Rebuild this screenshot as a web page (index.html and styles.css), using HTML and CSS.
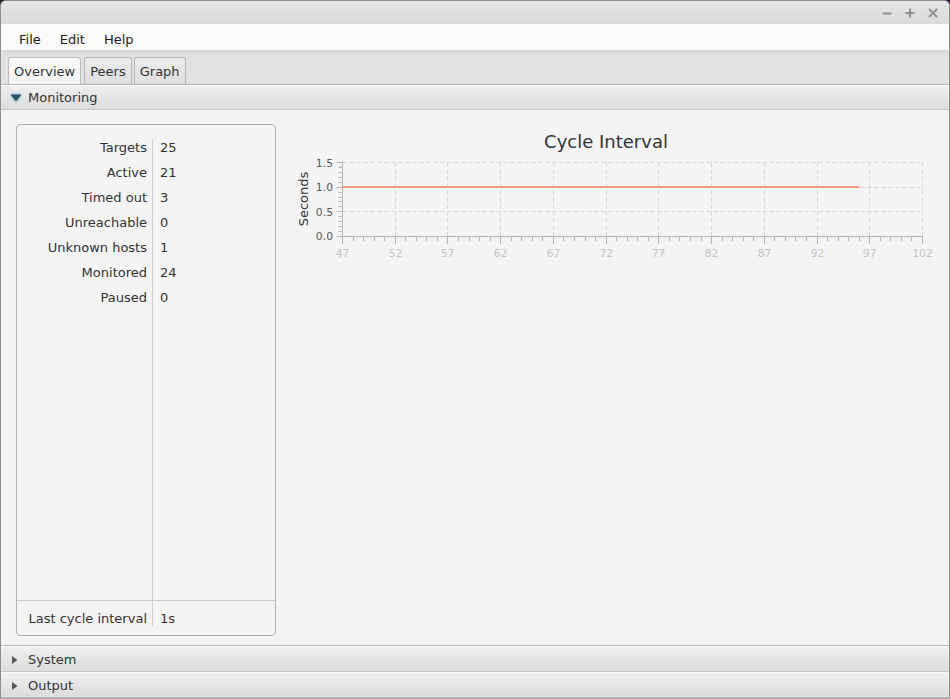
FILE: index.html
```html
<!DOCTYPE html>
<html>
<head>
<meta charset="utf-8">
<link rel="stylesheet" href="styles.css">
</head>
<body>
<div class="window">
  <div class="titlebar">
    <div class="controls">
      <svg class="ctl" width="10" height="10" viewBox="0 0 10 10"><path d="M0.5 5.5H9.5" /></svg>
      <svg class="ctl" width="10" height="10" viewBox="0 0 10 10"><path d="M0.5 5H9.5M5 0.5V9.5" /></svg>
      <svg class="ctl" width="10" height="10" viewBox="0 0 10 10"><path d="M1 1L9 9M9 1L1 9" /></svg>
    </div>
  </div>
  <div class="menubar">
    <span class="menu">File</span>
    <span class="menu">Edit</span>
    <span class="menu">Help</span>
  </div>
  <div class="tabbar">
    <div class="tab selected">Overview</div>
    <div class="tab">Peers</div>
    <div class="tab">Graph</div>
  </div>
  <div class="pane-header expanded">
    <svg class="arrow-down" width="14" height="10" viewBox="0 0 14 10"><polygon points="1.5,1.5 12.5,1.5 7,8.5" /></svg>
    <span>Monitoring</span>
  </div>
  <div class="pane-content">
    <div class="stats">
      <div class="stats-top">
        <div class="col-labels">
          <div class="row">Targets</div>
          <div class="row">Active</div>
          <div class="row">Timed out</div>
          <div class="row">Unreachable</div>
          <div class="row">Unknown hosts</div>
          <div class="row">Monitored</div>
          <div class="row">Paused</div>
        </div>
        <div class="sep"></div>
        <div class="col-values">
          <div class="row">25</div>
          <div class="row">21</div>
          <div class="row">3</div>
          <div class="row">0</div>
          <div class="row">1</div>
          <div class="row">24</div>
          <div class="row">0</div>
        </div>
      </div>
      <div class="stats-bottom">
        <div class="col-labels"><div class="row">Last cycle interval</div></div>
        <div class="sep short"></div>
        <div class="col-values"><div class="row">1s</div></div>
      </div>
    </div>
    <div class="chart">
      <svg width="655" height="150" viewBox="0 0 655 150">
        <text class="chart-title" x="321" y="17">Cycle Interval</text>
        <text class="axis-name" transform="translate(18 75) rotate(-90)">Seconds</text>
        <g class="grid">
          <path d="M57.5 38.5H637.5M57.5 63.5H637.5M57.5 87.5H637.5" />
          <path d="M110.5 38.5V112.5M162.5 38.5V112.5M215.5 38.5V112.5M268.5 38.5V112.5M321.5 38.5V112.5M373.5 38.5V112.5M426.5 38.5V112.5M479.5 38.5V112.5M532.5 38.5V112.5M584.5 38.5V112.5M637.5 38.5V112.5" />
        </g>
        <g class="axis">
          <path d="M57.5 38V113M57 112.5H638" />
          <path d="M51.5 38.5H57.5M51.5 63.5H57.5M51.5 87.5H57.5M51.5 112.5H57.5" />
          <path d="M53.5 107.5H57.5M53.5 102.5H57.5M53.5 97.5H57.5M53.5 92.5H57.5M53.5 82.5H57.5M53.5 77.5H57.5M53.5 73.5H57.5M53.5 68.5H57.5M53.5 58.5H57.5M53.5 53.5H57.5M53.5 48.5H57.5M53.5 43.5H57.5" />
          <path d="M57.5 112.5V120M110.5 112.5V120M162.5 112.5V120M215.5 112.5V120M268.5 112.5V120M321.5 112.5V120M373.5 112.5V120M426.5 112.5V120M479.5 112.5V120M532.5 112.5V120M584.5 112.5V120M637.5 112.5V120" />
          <path d="M68.5 112.5V117M78.5 112.5V117M89.5 112.5V117M99.5 112.5V117M120.5 112.5V117M131.5 112.5V117M141.5 112.5V117M152.5 112.5V117M173.5 112.5V117M184.5 112.5V117M194.5 112.5V117M205.5 112.5V117M226.5 112.5V117M236.5 112.5V117M247.5 112.5V117M257.5 112.5V117M278.5 112.5V117M289.5 112.5V117M300.5 112.5V117M310.5 112.5V117M331.5 112.5V117M342.5 112.5V117M352.5 112.5V117M363.5 112.5V117M384.5 112.5V117M394.5 112.5V117M405.5 112.5V117M416.5 112.5V117M437.5 112.5V117M447.5 112.5V117M458.5 112.5V117M468.5 112.5V117M489.5 112.5V117M500.5 112.5V117M510.5 112.5V117M521.5 112.5V117M542.5 112.5V117M553.5 112.5V117M563.5 112.5V117M574.5 112.5V117M595.5 112.5V117M605.5 112.5V117M616.5 112.5V117M626.5 112.5V117" />
        </g>
        <g class="ylabels">
          <text x="48" y="39">1.5</text>
          <text x="48" y="63.5">1.0</text>
          <text x="48" y="88">0.5</text>
          <text x="48" y="112.5">0.0</text>
        </g>
        <g class="xlabels">
          <text x="57.5" y="129">47</text>
          <text x="110.5" y="129">52</text>
          <text x="162.5" y="129">57</text>
          <text x="215.5" y="129">62</text>
          <text x="268.5" y="129">67</text>
          <text x="321.5" y="129">72</text>
          <text x="373.5" y="129">77</text>
          <text x="426.5" y="129">82</text>
          <text x="479.5" y="129">87</text>
          <text x="532.5" y="129">92</text>
          <text x="584.5" y="129">97</text>
          <text x="637.5" y="129">102</text>
        </g>
        <path class="series" d="M57.5 63H574.3" />
      </svg>
    </div>
  </div>
  <div class="pane-header collapsed">
    <svg class="arrow-right" width="14" height="10" viewBox="0 0 14 10"><polygon points="3,1 8.5,5 3,9" /></svg>
    <span>System</span>
  </div>
  <div class="pane-header collapsed">
    <svg class="arrow-right" width="14" height="10" viewBox="0 0 14 10"><polygon points="3,1 8.5,5 3,9" /></svg>
    <span>Output</span>
  </div>
</div>
</body>
</html>
```
FILE: styles.css
```css
* { box-sizing: border-box; }

html, body {
  margin: 0;
  padding: 0;
  background: #2f1d2f;
}

body {
  font-family: "DejaVu Sans", sans-serif;
  font-size: 13px;
  color: #333333;
}

.window {
  width: 950px;
  height: 699px;
  border: 1px solid #8e8e8e;
  border-bottom-color: #9a9a9a;
  border-radius: 6px 6px 0 0;
  background: #f4f4f4;
  display: flex;
  flex-direction: column;
  overflow: hidden;
}

.titlebar {
  height: 23px;
  flex: none;
  background: linear-gradient(#e6e6e6, #d9d9d9);
  display: flex;
  justify-content: flex-end;
  align-items: center;
  padding: 1px 11px 0 0;
}

.controls {
  display: flex;
  align-items: center;
  gap: 13px;
}

.ctl path {
  stroke: #8e8e8e;
  stroke-width: 2;
  fill: none;
}

.menubar {
  height: 27px;
  flex: none;
  background: #fafafa;
  display: flex;
  align-items: center;
  padding: 4px 0 0 18px;
  border-bottom: 1px solid #d8d8d8;
}

.menu {
  color: #222222;
  margin-right: 19px;
}

.tabbar {
  height: 33px;
  flex: none;
  background: linear-gradient(#d9d9d9, #e2e2e2 6px, #e2e2e2);
  display: flex;
  align-items: flex-end;
  gap: 2px;
  padding: 0 0 0 7px;
}

.tab {
  height: 27px;
  padding: 1px 5px 0 5px;
  border: 1px solid #b6b6b6;
  border-bottom: none;
  border-radius: 3px 3px 0 0;
  background: linear-gradient(#ececec, #dedede);
  display: flex;
  align-items: center;
  color: #333333;
}

.tab.selected {
  background: linear-gradient(#fbfbfb, #f2f2f2);
  border-color: #bdbdbd;
  margin-right: 1px;
}

.pane-header {
  height: 26px;
  flex: none;
  border-top: 1px solid #b8b8b8;
  border-bottom: 1px solid #c4c4c4;
  background: linear-gradient(#f0f0f0, #dcdcdc);
  box-shadow: inset 0 1px 0 #fbfbfb;
  display: flex;
  align-items: center;
  padding: 1px 0 0 8px;
  gap: 5px;
  color: #333333;
}

.pane-header.collapsed {
  border-top: 1px solid #f8f8f8;
  box-shadow: none;
}

.arrow-down polygon {
  fill: #2f4c5f;
}

.arrow-down {
  filter: drop-shadow(0 0 1.5px #39a9e8);
}

.arrow-right polygon {
  fill: #555555;
}

.pane-content {
  flex: 1;
  display: flex;
  align-items: flex-start;
  padding: 14px 15px 9px 15px;
  border-bottom: 1px solid #b8b8b8;
  background: #f4f4f4;
}

.stats {
  width: 260px;
  height: 512px;
  flex: none;
  border: 1px solid #b3b3b3;
  border-radius: 4px;
  display: flex;
  flex-direction: column;
}

.stats-top {
  flex: 1;
  display: flex;
}

.stats-bottom {
  height: 35px;
  flex: none;
  border-top: 1px solid #c9c9c9;
  display: flex;
}

.col-labels {
  width: 135px;
  flex: none;
  text-align: right;
  padding: 10px 5px 0 0;
}

.col-values {
  flex: 1;
  padding: 10px 0 0 7px;
}

.stats-bottom .col-labels,
.stats-bottom .col-values {
  padding-top: 5px;
}

.row {
  height: 25px;
  line-height: 25px;
  white-space: nowrap;
}

.sep {
  width: 1px;
  flex: none;
  background: #cfcfcf;
  margin-top: 14px;
}

.sep.short {
  margin-top: 0;
  height: 25px;
}

.chart {
  margin-left: 9px;
  flex: none;
}

.chart svg {
  display: block;
  font-family: "DejaVu Sans", sans-serif;
}

.chart-title {
  font-size: 18px;
  fill: #333333;
  text-anchor: middle;
  dominant-baseline: central;
}

.axis-name {
  font-size: 13px;
  fill: #333333;
  text-anchor: middle;
  dominant-baseline: central;
}

.grid path {
  stroke: #d6d6d6;
  stroke-width: 1;
  stroke-dasharray: 4 3;
  fill: none;
}

.axis path {
  stroke: #b5b5b5;
  stroke-width: 1;
  fill: none;
}

.ylabels text {
  font-size: 10.8px;
  fill: #595959;
  text-anchor: end;
  dominant-baseline: central;
}

.xlabels text {
  font-size: 10.8px;
  fill: #c4c4c4;
  text-anchor: middle;
  dominant-baseline: central;
}

.series {
  stroke: #f2a083;
  stroke-width: 2;
  fill: none;
}
```
